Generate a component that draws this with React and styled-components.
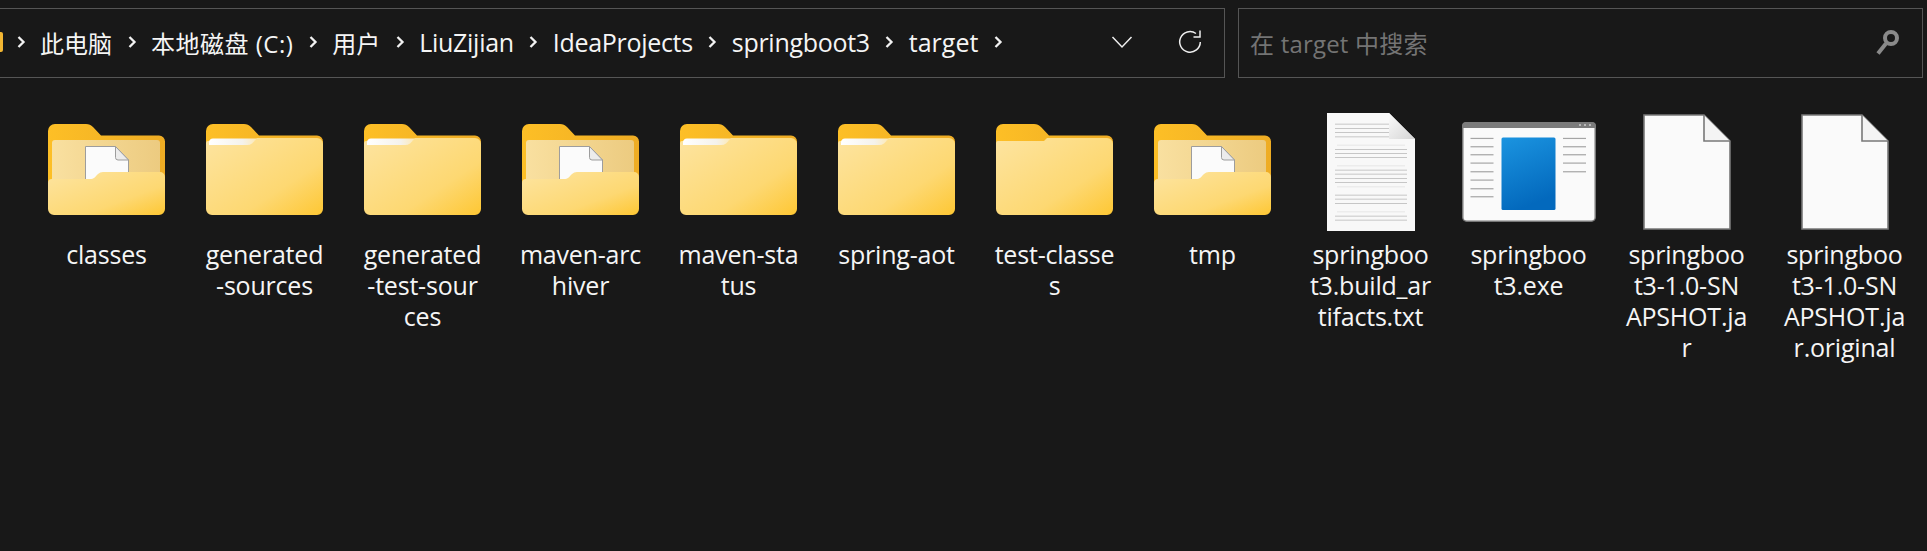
import React from 'react'
import styled, { createGlobalStyle } from 'styled-components'

const crumbs = [
    { text: '此电脑', spacing: '0', size: '24px' },
    { text: '本地磁盘 (C:)', spacing: '0.5px', size: '24px' },
    { text: '用户', spacing: '0', size: '24px' },
    { text: 'LiuZijian', spacing: '-0.3px', size: '25px' },
    { text: 'IdeaProjects', spacing: '-0.3px', size: '25px' },
    { text: 'springboot3', spacing: '-0.3px', size: '25px' },
    { text: 'target', spacing: '0', size: '25px' },
]

const items = [
    { icon: 'open', lines: ['classes'] },
    { icon: 'closed', lines: ['generated', '-sources'] },
    { icon: 'closed', lines: ['generated', '-test-sour', 'ces'] },
    { icon: 'open', lines: ['maven-arc', 'hiver'] },
    { icon: 'closed', lines: ['maven-sta', 'tus'] },
    { icon: 'closed', lines: ['spring-aot'] },
    { icon: 'plain', lines: ['test-classe', 's'] },
    { icon: 'open', lines: ['tmp'] },
    { icon: 'text', lines: ['springboo', 't3.build_ar', 'tifacts.txt'] },
    { icon: 'exe', lines: ['springboo', 't3.exe'] },
    { icon: 'blank', lines: ['springboo', 't3-1.0-SN', 'APSHOT.ja', 'r'] },
    { icon: 'blank', lines: ['springboo', 't3-1.0-SN', 'APSHOT.ja', 'r.original'] },
]

const textRows = [
    [72, 0], [85, 0], [97, 0], [110, 0], [135, 1], [148, 0], [160, 0], [172, 0], [197, 1], [210, 0],
    [222, 0], [235, 0], [247, 0], [260, 1], [285, 0], [297, 0], [310, 0], [335, 1], [348, 0], [360, 0],
]
const exeRows = [114, 139, 163, 188, 214, 239, 265, 289]

const FolderBack = () => (
    <path d="M0 8a7 7 0 0 1 7-7h31c3 0 5 1 7 3l8 8.500h58a6 6 0 0 1 6 6V60H0z" fill="url(#tab)" />
)

const ClosedFolder = ({ paper }) => (
    <svg width="117" height="92" viewBox="0 0 117 92">
        <FolderBack />
        <path d="M0 20q0-2 2-2h46l3-3h60a6 6 0 0 1 6 6v65a6 6 0 0 1-6 6H6a6 6 0 0 1-6-6z" fill="url(#front)" />
        {paper && <path d="M3 19a4 4 0 0 1 4-3.500h44l-5 5q-2 1.500-5 1.500H3z" fill="url(#sliver)" />}
    </svg>
)

const OpenFolder = () => (
    <svg width="117" height="92" viewBox="0 0 117 92">
        <FolderBack />
        <rect x="4" y="17" width="108" height="42" rx="3" fill="url(#inner)" />
        <path d="M37.500 23.500h30l13 13.500v20h-43z" fill="#fbfbfb" stroke="#9d9d9d" />
        <path d="M67.500 23.500v11q0 2.500 2.500 2.500h10.500z" fill="#ececec" stroke="#9d9d9d" />
        <path d="M0 60q0-4 4-4h38c4 0 5-2 8-5q2-2 5-2h57a5 5 0 0 1 5 5v32a6 6 0 0 1-6 6H6a6 6 0 0 1-6-6z" fill="url(#front)" />
    </svg>
)

const TextFile = () => (
    <svg width="88" height="118" viewBox="0 0 88 118">
        <path d="M0 0h62l26 26v92H0z" fill="#f8f8f8" />
        <path d="M62 0v26h26z" fill="url(#fold)" />
        {textRows.map(([v, faint]) => {
            const y = (v - 40) / 3
            return <rect key={v} x={faint ? 10 : 8} y={y} width={y < 25 ? 54 : faint ? 68 : 72} height="1" fill={faint ? '#e6e6e6' : '#c6c6c6'} />
        })}
    </svg>
)

const ExeFile = () => (
    <svg width="134" height="100" viewBox="0 0 134 100">
        <rect x="0.750" y="0.750" width="132.500" height="98.500" rx="4" fill="#fafafa" stroke="#777" strokeWidth="1.500" />
        <path d="M0 6V4a4 4 0 0 1 4-4h126a4 4 0 0 1 4 4v2z" fill="#7b7b7b" />
        <circle cx="118" cy="3" r="1" fill="#ccc" />
        <circle cx="123" cy="3" r="1" fill="#ccc" />
        <circle cx="128" cy="3" r="1" fill="#ccc" />
        <rect x="39.500" y="15.500" width="54" height="72.500" rx="1.500" fill="url(#blue)" />
        {exeRows.map(v => <rect key={v} x="8.500" y={(v - 65) / 3 - 0.5} width="23" height="1.200" fill="#a5a5a5" />)}
        {exeRows.slice(0, 5).map(v => <rect key={v} x="101" y={(v - 65) / 3 - 0.5} width="23" height="1.200" fill="#a5a5a5" />)}
    </svg>
)

const BlankFile = () => (
    <svg width="88" height="116" viewBox="0 0 88 116">
        <path d="M1 1h60l26 26v88H1z" fill="#fafafa" stroke="#787878" strokeWidth="1.600" />
        <path d="M61 1v26h26" fill="#f4f4f4" stroke="#787878" strokeWidth="1.600" />
    </svg>
)

const iconFor = {
    open: <OpenFolder />,
    closed: <ClosedFolder paper />,
    plain: <ClosedFolder />,
    text: <TextFile />,
    exe: <ExeFile />,
    blank: <BlankFile />,
}

const isFolder = icon => icon === 'open' || icon === 'closed' || icon === 'plain'

const Chevron = () => (
    <svg width="10" height="14" viewBox="0 0 10 14">
        <path d="M2.500 2 7.500 7 2.500 12" fill="none" stroke="#f2f2f2" strokeWidth="2.300" />
    </svg>
)

const Gradients = () => (
    <svg width="0" height="0" style={{ position: 'absolute' }}>
        <defs>
            <linearGradient id="tab" x1="0" y1="0" x2="1" y2="0">
                <stop offset="0" stopColor="#fdbf26" />
                <stop offset="1" stopColor="#eeac24" />
            </linearGradient>
            <linearGradient id="front" x1="0" y1="0" x2="1" y2="1">
                <stop offset="0" stopColor="#fde4a0" />
                <stop offset="0.65" stopColor="#fdd872" />
                <stop offset="1" stopColor="#fec733" />
            </linearGradient>
            <linearGradient id="sliver" x1="0" y1="0" x2="1" y2="0">
                <stop offset="0" stopColor="#ffffff" />
                <stop offset="0.7" stopColor="#f4f2ec" />
                <stop offset="1" stopColor="#fde9b4" />
            </linearGradient>
            <linearGradient id="inner" x1="0" y1="0" x2="1" y2="0">
                <stop offset="0" stopColor="#f9e0a0" />
                <stop offset="1" stopColor="#eccb80" />
            </linearGradient>
            <linearGradient id="fold" x1="0" y1="0" x2="1" y2="1">
                <stop offset="0" stopColor="#fbfbfb" />
                <stop offset="1" stopColor="#d4d4d4" />
            </linearGradient>
            <linearGradient id="blue" x1="0" y1="0" x2="0.300" y2="1">
                <stop offset="0" stopColor="#1b94e0" />
                <stop offset="1" stopColor="#0369bd" />
            </linearGradient>
        </defs>
    </svg>
)

const App = () => {
    return (
        <Page>
            <GlobalStyle />
            <Gradients />
            <TopBar>
                <AddressBar>
                    <FolderSliver />
                    <Chevron />
                    {crumbs.map(crumb => (
                        <React.Fragment key={crumb.text}>
                            <Crumb $size={crumb.size} $spacing={crumb.spacing}>{crumb.text}</Crumb>
                            <Chevron />
                        </React.Fragment>
                    ))}
                    <BarActions>
                        <svg width="22" height="14" viewBox="0 0 22 14">
                            <path d="M1.500 2 11 12 20.500 2" fill="none" stroke="#eee" strokeWidth="1.500" />
                        </svg>
                        <svg width="24" height="26" viewBox="0 0 24 26">
                            <path d="M18 4.500A10.300 10.300 0 1 0 22.300 13" fill="none" stroke="#eee" strokeWidth="1.500" />
                            <path d="M22 1.500V8h-6.500" fill="none" stroke="#eee" strokeWidth="1.500" />
                        </svg>
                    </BarActions>
                </AddressBar>
                <SearchBox>
                    <Placeholder>在 target 中搜索</Placeholder>
                    <svg width="25" height="26" viewBox="0 0 25 26">
                        <circle cx="16" cy="9" r="6" fill="none" stroke="#8a8a8a" strokeWidth="4" />
                        <path d="M11 14.500 3 24.500" fill="none" stroke="#8a8a8a" strokeWidth="4" />
                    </svg>
                </SearchBox>
            </TopBar>
            <FileGrid>
                {items.map((item, i) => (
                    <FileItem key={i}>
                        <IconBox $folder={isFolder(item.icon)}>{iconFor[item.icon]}</IconBox>
                        <Label>
                            {item.lines.map(line => <LabelLine key={line}>{line}</LabelLine>)}
                        </Label>
                    </FileItem>
                ))}
            </FileGrid>
        </Page>
    )
}

const GlobalStyle = createGlobalStyle`
    body {
        margin: 0;
        background-color: #181818;
    }
`

const Page = styled.div`
    width: 1927px;
    height: 551px;
    overflow: hidden;
    background-color: #181818;
    color: #f5f5f5;
    font-family: "Open Sans", "Noto Sans CJK SC", sans-serif;
    font-size: 24px;
`

const TopBar = styled.div`
    display: flex;
    gap: 13px;
    padding: 8px 4px 0 0;
`

const AddressBar = styled.div`
    width: 1235px;
    height: 70px;
    margin-left: -10px;
    padding: 0 22px 2px 0;
    box-sizing: border-box;
    border: 1.500px solid #555;
    display: flex;
    align-items: center;
    gap: 14.500px;
    flex-shrink: 0;
`

const FolderSliver = styled.div`
    width: 12px;
    height: 20px;
    margin-right: -2px;
    background-color: #f2b632;
    border-radius: 2px;
`

const Crumb = styled.span`
    font-size: ${props => props.$size};
    letter-spacing: ${props => props.$spacing};
`

const BarActions = styled.div`
    margin-left: auto;
    display: flex;
    align-items: center;
    gap: 45px;
`

const SearchBox = styled.div`
    flex: 1;
    height: 70px;
    padding: 0 22px 2px 11px;
    box-sizing: border-box;
    border: 1.500px solid #555;
    display: flex;
    align-items: center;
    justify-content: space-between;
`

const Placeholder = styled.span`
    color: #747474;
    letter-spacing: 0.2px;
`

const FileGrid = styled.div`
    display: grid;
    grid-template-columns: repeat(12, 158px);
    padding: 35px 0 0 27.500px;
`

const FileItem = styled.div`
    display: flex;
    flex-direction: column;
    align-items: center;
`

const IconBox = styled.div`
    height: 118px;
    box-sizing: border-box;
    padding-bottom: ${props => (props.$folder ? '6px' : '0')};
    display: flex;
    align-items: center;
    justify-content: center;
`

const Label = styled.div`
    margin-top: 8px;
    text-align: center;
    font-size: 25px;
    line-height: 31px;
    letter-spacing: -0.2px;
`

const LabelLine = styled.div`
    white-space: nowrap;
`

export default App
